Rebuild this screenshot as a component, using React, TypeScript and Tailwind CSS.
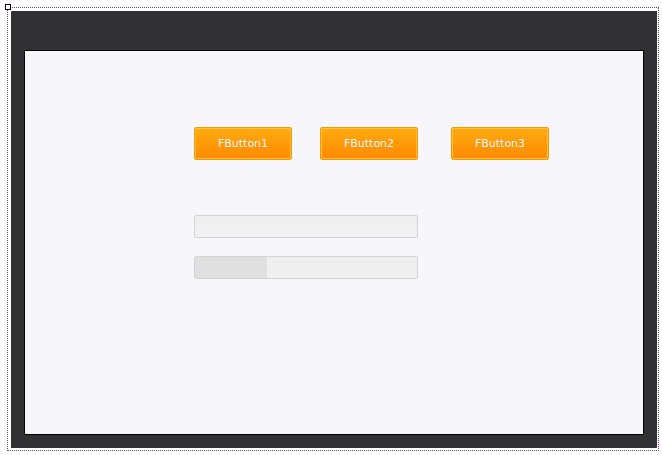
export default function App() {
    const buttons = [
        { label: 'FButton1', ml: 'ml-0' },
        { label: 'FButton2', ml: 'ml-[28px]' },
        { label: 'FButton3', ml: 'ml-[33px]' },
    ];

    return (
        <div className="relative w-[662px] h-[455px] bg-white p-[7px]" style={{ fontFamily: '"DejaVu Sans", Verdana, sans-serif' }}>
            {/* selection handle */}
            <div className="absolute left-[5px] top-[4px] w-[6px] h-[6px] bg-white border border-black" />

            <div className="w-[652px] h-[444px] border border-dotted border-[#555] p-[3px]">
                <div className="relative w-[646px] h-[437px] bg-[#313133] pt-[39px] pl-[13px]">
                    <div className="absolute left-0 top-0 w-[1px] h-[1px] bg-[#ff00ff]" />
                    <div className="absolute right-0 bottom-0 w-[1px] h-[1px] bg-[#ff00ff]" />

                    <div className="w-[620px] h-[385px] border border-black bg-[#f7f6fb] pt-[76px] pl-[169px]">
                        <div className="flex">
                            {buttons.map(b => (
                                <button
                                    key={b.label}
                                    className={`${b.ml} w-[98px] h-[33px] rounded-[2px] border border-[#f29a00] bg-gradient-to-b from-[#ffab10] to-[#ff8a00] shadow-[inset_0_0_0_1px_#ffc040] text-white text-[11px] leading-none`}
                                    style={{ textShadow: '0 0 1px rgba(180,80,0,0.4)' }}
                                >
                                    {b.label}
                                </button>
                            ))}
                        </div>

                        <div className="mt-[55px] w-[224px] h-[23px] rounded-[2px] border border-[#d3d3d6] bg-gradient-to-b from-[#eeeeef] to-[#f1f1f2]" />

                        <div className="mt-[18px] w-[224px] h-[23px] rounded-[2px] border border-[#d3d3d6] bg-gradient-to-b from-[#eeeeef] to-[#f1f1f2] flex">
                            <div className="w-[72px] h-full bg-[#e0e0e0]" />
                        </div>
                    </div>
                </div>
            </div>
        </div>
    );
}
